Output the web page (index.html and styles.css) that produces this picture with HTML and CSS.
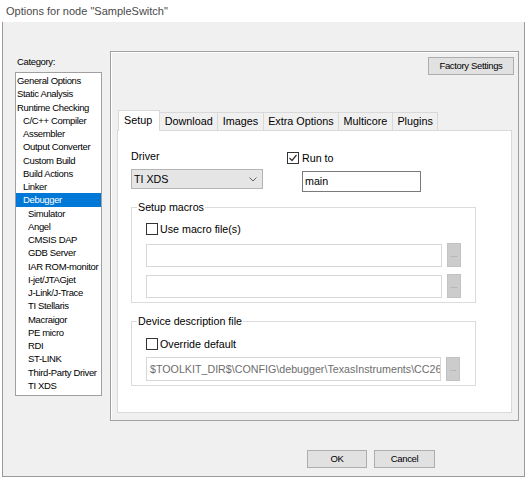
FILE: index.html
```html
<!DOCTYPE html>
<html>
<head>
<meta charset="utf-8">
<link rel="stylesheet" href="styles.css">
</head>
<body>
<div class="window">
  <div class="titlebar">Options for node "SampleSwitch"</div>
  <div class="client">
    <div class="content">
      <div class="leftcol">
        <div class="cat-label">Category:</div>
        <ul class="listbox">
          <li class="l0">General Options</li>
          <li class="l0">Static Analysis</li>
          <li class="l0">Runtime Checking</li>
          <li class="l1">C/C++ Compiler</li>
          <li class="l1">Assembler</li>
          <li class="l1">Output Converter</li>
          <li class="l1">Custom Build</li>
          <li class="l1">Build Actions</li>
          <li class="l1">Linker</li>
          <li class="l1 sel">Debugger</li>
          <li class="l2">Simulator</li>
          <li class="l2">Angel</li>
          <li class="l2">CMSIS DAP</li>
          <li class="l2">GDB Server</li>
          <li class="l2">IAR ROM-monitor</li>
          <li class="l2">I-jet/JTAGjet</li>
          <li class="l2">J-Link/J-Trace</li>
          <li class="l2">TI Stellaris</li>
          <li class="l2">Macraigor</li>
          <li class="l2">PE micro</li>
          <li class="l2">RDI</li>
          <li class="l2">ST-LINK</li>
          <li class="l2">Third-Party Driver</li>
          <li class="l2">TI XDS</li>
        </ul>
      </div>
      <div class="panel">
        <div class="panel-top"><div class="btn factory">Factory Settings</div></div>
        <div class="tabs">
          <div class="tab active">Setup</div>
          <div class="tab">Download</div>
          <div class="tab">Images</div>
          <div class="tab">Extra Options</div>
          <div class="tab">Multicore</div>
          <div class="tab">Plugins</div>
        </div>
        <div class="tabpage">
          <div class="row1">
            <div class="drivercol">
              <div class="lbl">Driver</div>
              <div class="combo">
                <span>TI XDS</span>
                <svg class="chev" width="8" height="5" viewBox="0 0 8 5"><polyline points="0.5,0.5 4,4 7.5,0.5" fill="none" stroke="#606060" stroke-width="1"/></svg>
              </div>
            </div>
            <div class="runcol">
              <div class="chkrow">
                <div class="chk"><svg width="10" height="10" viewBox="0 0 10 10"><polyline points="1.5,5 4,7.5 8.5,2" fill="none" stroke="#333" stroke-width="1.2"/></svg></div>
                <span class="chklbl">Run to</span>
              </div>
              <div class="edit main">main</div>
            </div>
          </div>
          <fieldset class="group g1">
            <legend>Setup macros</legend>
            <div class="rows">
              <div class="chkrow">
                <div class="chk"></div>
                <span class="chklbl">Use macro file(s)</span>
              </div>
              <div class="fieldrow first">
                <div class="field"></div>
                <div class="dots">...</div>
              </div>
              <div class="fieldrow second">
                <div class="field"></div>
                <div class="dots">...</div>
              </div>
            </div>
          </fieldset>
          <fieldset class="group g2">
            <legend>Device description file</legend>
            <div class="rows">
              <div class="chkrow">
                <div class="chk"></div>
                <span class="chklbl">Override default</span>
              </div>
              <div class="fieldrow path">
                <div class="field pathfield">$TOOLKIT_DIR$\CONFIG\debugger\TexasInstruments\CC26</div>
                <div class="dots">...</div>
              </div>
            </div>
          </fieldset>
        </div>
      </div>
    </div>
    <div class="footer">
      <div class="btn ok">OK</div>
      <div class="btn cancel">Cancel</div>
    </div>
  </div>
</div>
</body>
</html>
```

FILE: styles.css
```css
body {
  margin: 0;
  background: #ffffff;
  font-family: "Liberation Sans", Arial, sans-serif;
  color: #000;
}

.window {
  width: 527px;
  height: 480px;
  overflow: hidden;
}

.titlebar {
  height: 22px;
  line-height: 22px;
  padding-left: 6px;
  font-size: 11px;
  color: #4a4a4a;
}

.client {
  margin-left: 2px;
  width: 523px;
  height: 455px;
  box-sizing: border-box;
  border: 1px solid #9a9a9a;
  border-top: none;
  background: #f0f0f0;
}

.content {
  display: flex;
  padding: 29px 0 0 12px;
}

.cat-label,
.listbox li,
.btn {
  font-size: 9.5px;
  letter-spacing: -0.35px;
}

.leftcol {
  width: 87px;
  margin-right: 8px;
  padding-top: 4px;
}

.cat-label {
  line-height: 13px;
  height: 13px;
  padding-left: 2px;
}

.listbox {
  margin: 4px 0 0;
  padding: 1px 0 0;
  list-style: none;
  height: 324px;
  box-sizing: border-box;
  border: 1px solid #a0a0a0;
  background: #fff;
}

.listbox li {
  height: 13.25px;
  line-height: 13.25px;
  white-space: nowrap;
}

.l0 { padding-left: 1px; }
.l1 { padding-left: 7px; }
.l2 { padding-left: 12px; }

.sel {
  background: #0078d7;
  color: #fff;
}

.panel {
  width: 409px;
  height: 370px;
  box-sizing: border-box;
  border: 1px solid #a0a0a0;
  box-shadow: inset 1px 1px 0 #ffffff;
  display: flex;
  flex-direction: column;
}

.panel-top {
  display: flex;
  justify-content: flex-end;
  padding: 5px 4px 0 0;
}

.btn {
  height: 18px;
  box-sizing: border-box;
  border: 1px solid #adadad;
  background: #e1e1e1;
  text-align: center;
  line-height: 16px;
  white-space: nowrap;
}

.factory { width: 86px; }

.tabs {
  display: flex;
  align-items: flex-end;
  height: 20px;
  margin: 35px 0 0 7px;
  position: relative;
  z-index: 1;
}

.tab {
  height: 18px;
  box-sizing: border-box;
  padding: 0 4.5px;
  border-top: 1px solid #d9d9d9;
  border-right: 1px solid #d9d9d9;
  background: #f0f0f0;
  font-size: 10.8px;
  line-height: 17px;
  white-space: nowrap;
}

.tab.active {
  height: 21px;
  margin-bottom: -1px;
  padding: 0 7px 0 5px;
  border-left: 1px solid #d9d9d9;
  background: #fff;
  line-height: 19px;
}

.tabpage {
  margin-left: 6px;
  width: 395px;
  height: 283px;
  box-sizing: border-box;
  border: 1px solid #d9d9d9;
  background: #fff;
  padding: 19px 0 0 13px;
  font-size: 10.7px;
}

.row1 {
  display: flex;
  gap: 24px;
}

.drivercol { width: 132px; }

.lbl {
  height: 13px;
  line-height: 13px;
}

.combo {
  margin-top: 6px;
  height: 20px;
  box-sizing: border-box;
  border: 1px solid #b4b4b4;
  background: #e5e5e5;
  display: flex;
  align-items: center;
  justify-content: space-between;
  padding: 0 5px 0 2px;
}

.chev { display: block; }

.runcol { padding-top: 1px; }

.chkrow {
  display: flex;
  align-items: center;
  height: 13px;
}

.chk {
  width: 12px;
  height: 12px;
  box-sizing: border-box;
  border: 1px solid #333;
  background: #fff;
  display: flex;
  align-items: center;
  justify-content: center;
}

.chk svg { display: block; }

.chklbl {
  margin-left: 2px;
  white-space: nowrap;
}

.runcol .chklbl { margin-left: 3px; }

.edit {
  box-sizing: border-box;
  background: #fff;
  white-space: nowrap;
}

.main {
  margin: 7px 0 0 15px;
  width: 119px;
  height: 21px;
  border: 1px solid #7a7a7a;
  padding-left: 2px;
  line-height: 19px;
}

.group {
  margin: 0;
  width: 345px;
  box-sizing: border-box;
  border: 1px solid #dcdcdc;
  padding: 8px 0 4px 5px;
  min-inline-size: 0;
}

.g1 { margin-top: 8px; }
.g2 { margin-top: 11px; padding-top: 9px; }

.group legend {
  padding: 0 1px;
  line-height: 14px;
  height: 14px;
  font-size: 10.7px;
}

.rows { margin-left: 9px; }

.fieldrow {
  display: flex;
  align-items: center;
  height: 24px;
}

.fieldrow.first { margin-top: 8px; }
.fieldrow.second { margin-top: 7px; }
.fieldrow.path { margin-top: 7px; }

.field {
  width: 296px;
  height: 23px;
  box-sizing: border-box;
  border: 1px solid #d7d7d7;
  background: #fff;
}

.pathfield {
  width: 295px;
  height: 24px;
  padding-left: 3px;
  line-height: 22px;
  color: #6d6d6d;
  white-space: nowrap;
  overflow: hidden;
}

.dots {
  margin-left: 5px;
  width: 14px;
  height: 24px;
  box-sizing: border-box;
  border: 1px solid #c2c2c2;
  background: #cccccc;
  color: #8a8a8a;
  font-size: 8px;
  line-height: 22px;
  text-align: center;
}

.footer {
  display: flex;
  justify-content: flex-end;
  gap: 7px;
  margin-top: 29px;
  padding-right: 89px;
}

.ok { width: 60px; }
.cancel { width: 61px; }
```
